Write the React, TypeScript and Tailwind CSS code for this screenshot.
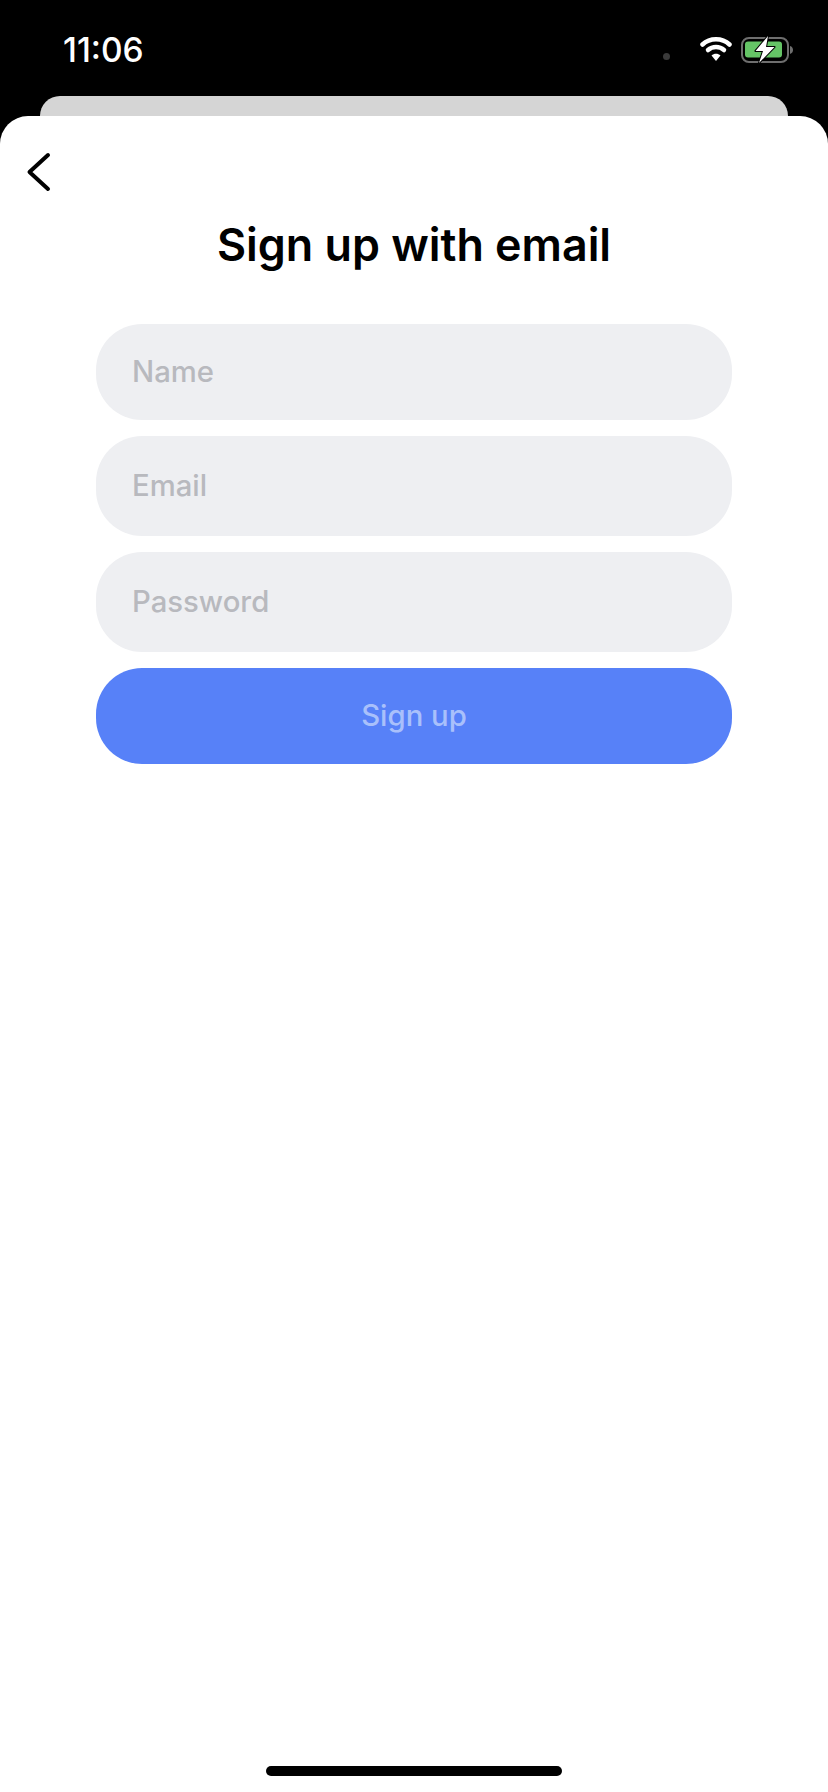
import React from 'react';

const fields = [
  { label: 'Name', height: 'h-[96px]' },
  { label: 'Email', height: 'h-[100px]' },
  { label: 'Password', height: 'h-[100px]' },
];

const WifiIcon = () => (
  <svg width="32" height="25" viewBox="0 0 32 25" className="block">
    <path d="M2.500 8.500C10 1.500 22 1.500 29.500 8.500" fill="none" stroke="#fff" strokeWidth="4.500" strokeLinecap="round" />
    <path d="M8 14C12.500 10 19.500 10 24 14" fill="none" stroke="#fff" strokeWidth="4.500" strokeLinecap="round" />
    <path d="M11.500 19.500 16 25 20.500 19.500C18 17.300 14 17.300 11.500 19.500Z" fill="#fff" />
  </svg>
);

const BatteryIcon = () => (
  <svg width="54" height="28" viewBox="0 0 54 28" className="block">
    <rect x="2" y="2" width="46" height="24" rx="7" fill="none" stroke="#6e6e6e" strokeWidth="2" />
    <rect x="5" y="5.500" width="37" height="16" rx="3" fill="#65c466" />
    <path d="M50 10c2 .6 3 2.200 3 4s-1 3.400-3 4Z" fill="#6e6e6e" />
    <path
      d="M28 0 15.500 15H23L19 27 34.500 11H26Z"
      fill="#fff"
      stroke="#000"
      strokeWidth="2"
      strokeLinejoin="round"
      style={{ paintOrder: 'stroke' }}
    />
  </svg>
);

export default function App() {
  return (
    <div className="w-[828px] h-[1792px] bg-black flex flex-col overflow-hidden font-['Inter',sans-serif]">
      <div className="h-[96px] shrink-0 flex items-start justify-between pl-[63px] pr-[34px]">
        <span className="mt-[30px] text-white text-[33.500px] leading-[40px] font-medium">11:06</span>
        <div className="flex items-start mt-[36px]">
          <span className="w-[7px] h-[7px] mt-[17px] mr-[30px] rounded-full bg-[#3a3a3a]" />
          <WifiIcon />
          <span className="ml-[8px]">
            <BatteryIcon />
          </span>
        </div>
      </div>

      <div className="h-[20px] shrink-0 mx-[40px] bg-[#d5d5d5] rounded-t-[20px]" />

      <div className="flex-1 bg-white rounded-t-[28px] flex flex-col">
        <div className="h-[98px] pl-[26px] pt-[36px]">
          <svg width="26" height="40" viewBox="0 0 26 40" className="block">
            <path d="M22 3 3.500 20 22 37" fill="none" stroke="#000" strokeWidth="4" strokeLinecap="round" strokeLinejoin="round" />
          </svg>
        </div>

        <h1 className="mt-[-1px] text-center text-[44.800px] leading-[64px] font-semibold text-black">Sign up with email</h1>

        <div className="mt-[47px] mx-[96px] flex flex-col gap-[16px]">
          {fields.map((f) => (
            <div
              key={f.label}
              className={`${f.height} rounded-[46px] bg-[#eeeff2] flex items-center pl-[36px] text-[29.300px] font-[550] text-[#b8b9be]`}
            >
              {f.label}
            </div>
          ))}
          <button className="h-[96px] rounded-[46px] bg-[#5781f8] text-[29.300px] font-[550] text-[#a9c0fb]">Sign up</button>
        </div>

        <div className="mt-auto mb-[16px] mx-auto w-[296px] h-[10px] rounded-full bg-black" />
      </div>
    </div>
  );
}
